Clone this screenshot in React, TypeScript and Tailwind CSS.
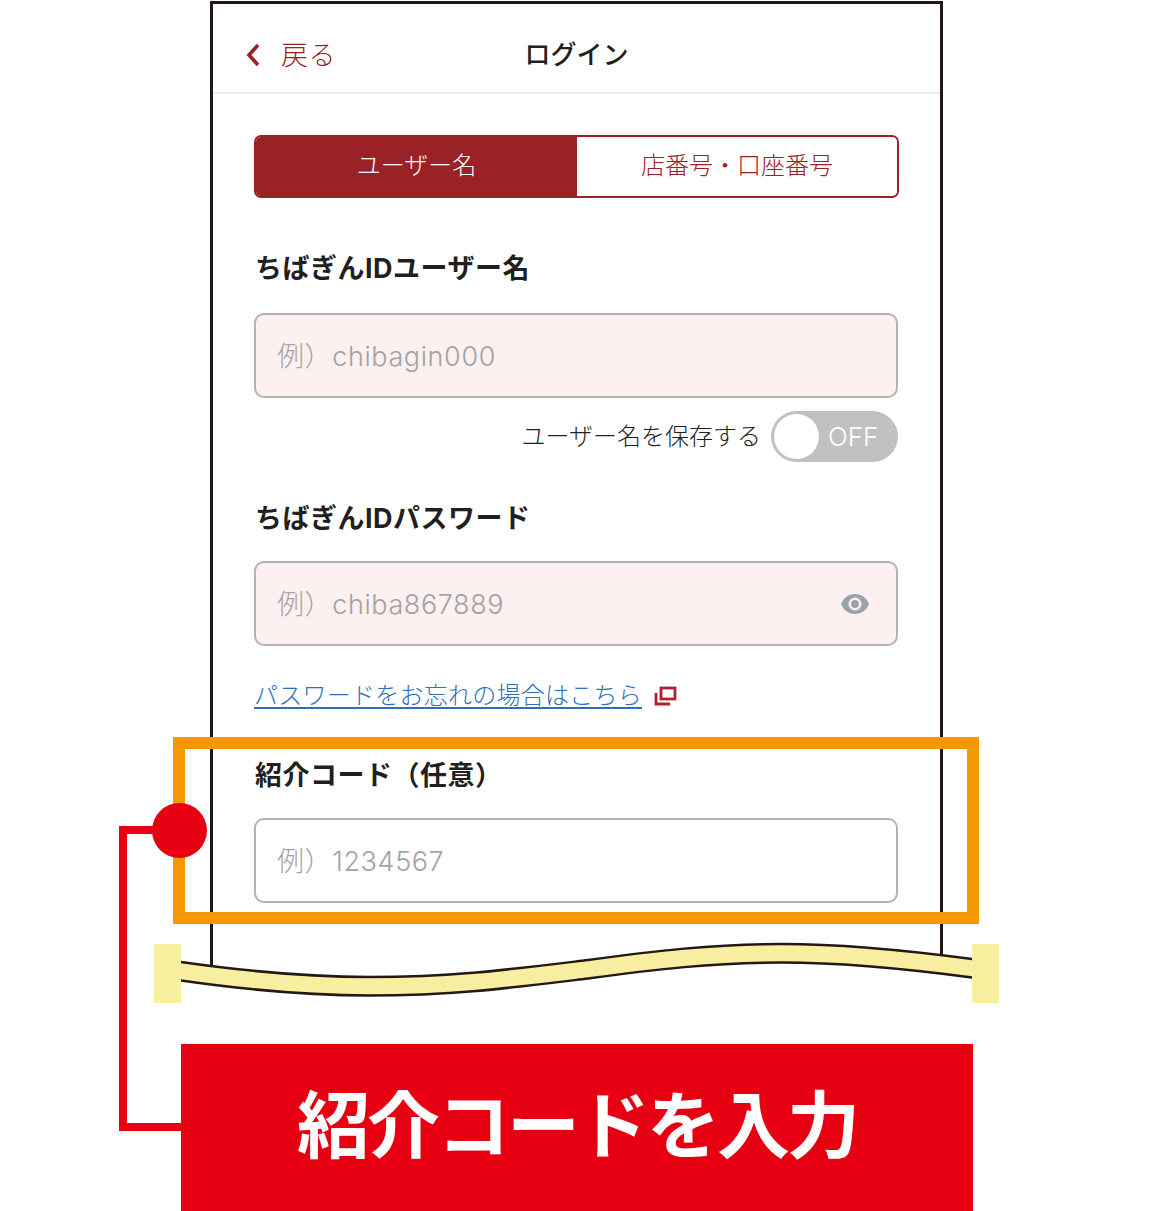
const jp = "font-['Inter','Noto_Sans_CJK_JP','Noto_Sans',sans-serif]";

function Field({ placeholder, filled, eye }: { placeholder: string; filled?: boolean; eye?: boolean }) {
  return (
    <div className={`flex h-[85px] w-[644px] items-center justify-between rounded-[10px] border-2 border-[#b1b3b6] pl-[21px] pr-[26px] ${filled ? "bg-[#fcf0f0]" : "bg-white"}`}>
      <span className="pt-[2px] text-[27px] font-light leading-none tracking-[0.6px] text-[#a3a3a3]">{placeholder}</span>
      {eye && (
        <svg width="30" height="22" viewBox="0 0 30 22">
          <path fill="#9aa4ac" fillRule="evenodd" d="M15 1C8.6 1 3.2 5.1 1 11c2.2 5.900 7.600 10 14 10s11.800-4.100 14-10C26.800 5.100 21.400 1 15 1zm0 16.500a6.500 6.500 0 1 1 0-13 6.500 6.500 0 0 1 0 13zm0-10.400a3.900 3.900 0 1 0 0 7.800 3.900 3.900 0 0 0 0-7.800z" />
        </svg>
      )}
    </div>
  );
}

export default function App() {
  return (
    <div className={`relative h-[1211px] w-[1152px] overflow-hidden bg-white ${jp}`}>
      <div className="ml-[210px] mt-px h-[975px] w-[733px] border-x-[3px] border-t-[3px] border-[#231815]">
        <header className="relative flex h-[90px] items-center justify-center border-b-2 border-[#ebebeb] pt-[13px]">
          <div className="absolute left-[33px] top-[33px] flex items-center gap-[21px] text-[#9a2226]">
            <svg width="14" height="24" viewBox="0 0 14 24" fill="none" stroke="#9a2226" strokeWidth="3.600" className="-mt-[3px]">
              <path d="M12 2 3 12l9 10" />
            </svg>
            <span className="text-[27px] font-light leading-[38px] tracking-[0.5px]">戻る</span>
          </div>
          <span className="text-[26px] font-medium text-[#231f20]">ログイン</span>
        </header>

        <main className="pl-[41px]">
          <div className="mt-[41px] flex h-[63px] w-[645px] overflow-hidden rounded-[7px] border-2 border-[#9a2226] text-[24px] font-light">
            <div className="flex w-[321px] items-center justify-center bg-[#9a2226] pb-px text-white">ユーザー名</div>
            <div className="flex flex-1 items-center justify-center bg-white pb-px text-[#9a2226]">店番号・口座番号</div>
          </div>

          <h2 className="ml-px mt-[51px] text-[27px] font-bold leading-[40px] tracking-[0.5px] text-[#231f20]">ちばぎんIDユーザー名</h2>
          <div className="mt-[24px]"><Field placeholder="例）chibagin000" filled /></div>

          <div className="mt-[13px] flex w-[644px] items-center justify-end gap-[10px]">
            <span className="text-[24px] font-light leading-[36px] text-[#231f20]">ユーザー名を保存する</span>
            <div className="flex h-[51px] w-[127px] items-center rounded-full bg-[#c1c1c1] pl-[3px]">
              <div className="h-[45px] w-[45px] rounded-full bg-white" />
              <span className="ml-[9px] text-[26px] font-light leading-none text-white">OFF</span>
            </div>
          </div>

          <h2 className="ml-px mt-[37px] text-[27px] font-bold leading-[40px] tracking-[0.5px] text-[#231f20]">ちばぎんIDパスワード</h2>
          <div className="mt-[22px]"><Field placeholder="例）chiba867889" filled eye /></div>

          <div className="mt-[33px] flex items-center gap-[13px]">
            <span className="text-[24px] font-light leading-[34px] tracking-[0.25px] text-[#2f6fb8] underline underline-offset-[3px]">パスワードをお忘れの場合はこちら</span>
            <svg width="23" height="20" viewBox="0 0 23 20" fill="none" stroke="#ad2429" strokeWidth="2.800" className="-ml-px">
              <rect x="7" y="2" width="14" height="11" />
              <path d="M2 7v11h14" />
            </svg>
          </div>

          <h2 className="ml-px mt-[43px] text-[27px] font-bold leading-[40px] tracking-[0.5px] text-[#231f20]">紹介コード（任意）</h2>
          <div className="mt-[22px]"><Field placeholder="例）1234567" /></div>
        </main>
      </div>

      {/* annotation overlays */}
      <div className="absolute left-[173px] top-[737px] h-[187px] w-[806px] border-[12px] border-[#f39800]" />
      <div className="absolute left-[119px] top-[826px] h-[305px] w-[70px] border-y-[8px] border-l-[8px] border-[#e60012]" />
      <div className="absolute left-[152px] top-[803px] h-[55px] w-[55px] rounded-full bg-[#e60012]" />
      <svg className="absolute left-[154px] top-[940px]" width="846" height="66" viewBox="0 0 846 66">
        <path fill="#fff" d="M27 22C90 31 150 37 215 37C300 37 360 29 434 20C500 11 560 4 628 4C690 4 750 10 818 19V66H27z" />
        <path fill="#f7ef9f" d="M27 22C90 31 150 37 215 37C300 37 360 29 434 20C500 11 560 4 628 4C690 4 750 10 818 19V37.500C750 28.500 690 22.500 628 22.500C560 22.500 500 29.500 434 38.500C360 47.500 300 55.500 215 55.500C150 55.500 90 49.500 27 40.500z" />
        <path fill="none" stroke="#231815" strokeWidth="2.500" d="M27 22C90 31 150 37 215 37C300 37 360 29 434 20C500 11 560 4 628 4C690 4 750 10 818 19" />
        <path fill="none" stroke="#231815" strokeWidth="2.500" d="M27 40.500C90 49.500 150 55.500 215 55.500C300 55.500 360 47.500 434 38.500C500 29.500 560 22.500 628 22.500C690 22.500 750 28.500 818 37.500" />
        <rect x="0" y="4" width="27" height="59" fill="#f7ef9f" />
        <rect x="818" y="4" width="27" height="59" fill="#f7ef9f" />
      </svg>

      <div className="absolute left-[181px] top-[1044px] flex h-[167px] w-[792px] items-center justify-center bg-[#e60012] pb-[4px] text-[73px] font-semibold leading-none tracking-[-3px] text-white">
        紹介コードを入力
      </div>
    </div>
  );
}
